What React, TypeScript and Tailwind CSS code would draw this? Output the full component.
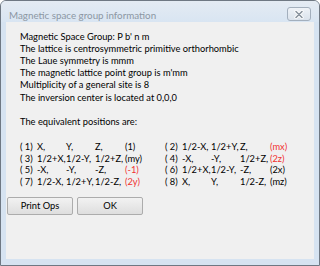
const rows: [string, string, string, string, string, boolean][] = [
  ["( 1)", "X,", "Y,", "Z,", "(1)", false],
  ["( 2)", "1/2-X,", "1/2+Y,", "Z,", "(mx)", true],
  ["( 3)", "1/2+X,", "1/2-Y,", "1/2+Z,", "(my)", false],
  ["( 4)", "-X,", "-Y,", "1/2+Z,", "(2z)", true],
  ["( 5)", "-X,", "-Y,", "-Z,", "(-1)", true],
  ["( 6)", "1/2+X,", "1/2-Y,", "-Z,", "(2x)", false],
  ["( 7)", "1/2-X,", "1/2+Y,", "1/2-Z,", "(2y)", true],
  ["( 8)", "X,", "Y,", "1/2-Z,", "(mz)", false],
];

const lines = [
  "Magnetic Space Group: P b' n m",
  "The lattice is centrosymmetric primitive orthorhombic",
  "The Laue symmetry is mmm",
  "The magnetic lattice point group is m'mm",
  "Multiplicity of a general site is 8",
  "The inversion center is located at 0,0,0",
  "\u00a0",
  "The equivalent positions are:",
];

function CloseButton() {
  return (
    <div className="ml-auto mr-[8px] mt-[6px] w-[24px] h-[14px] rounded-[3px] border border-[#a3afbd] bg-gradient-to-b from-[#eef2f7] to-[#dbe3ec] flex items-center justify-center">
      <svg width="10" height="9" viewBox="0 0 10 9">
        <path d="M2 1.5 L8 7.5 M8 1.5 L2 7.5" stroke="#ffffff" strokeWidth="3.2" strokeLinecap="round" />
        <path d="M2 1.5 L8 7.5 M8 1.5 L2 7.5" stroke="#8a949f" strokeWidth="1.6" strokeLinecap="round" />
      </svg>
    </div>
  );
}

export default function App() {
  return (
    <div
      className="w-[320px] h-[266px] border border-[#6f7883] rounded-t-[6px] bg-[#d6e3f1] flex flex-col overflow-hidden"
      style={{ fontFamily: "Lato, 'Noto Sans', sans-serif" }}
    >
      {/* title bar */}
      <div className="h-[21px] flex items-start bg-gradient-to-b from-[#e4ebf3] to-[#d9e5f2]">
        <span className="pl-[8px] pt-[8px] text-[9.8px] leading-[13px] text-[#8c97a3] whitespace-nowrap">
          Magnetic space group information
        </span>
        <CloseButton />
      </div>

      {/* client area */}
      <div className="mx-[5px] h-[237px] bg-[#f0f0f0] flex flex-col pt-[8.6px] text-[9.3px] text-black">
        <div className="pl-[14px] leading-[12.2px]">
          {lines.map((l, i) => (
            <div key={i} className="whitespace-nowrap">{l}</div>
          ))}
        </div>

        <div className="pl-[14px] mt-[12.6px] grid grid-cols-[17px_29px_29px_30px_40px_17px_29px_29px_30px_auto] leading-[11.7px] whitespace-pre">
          {rows.map((r, i) => (
            <div key={i} className="contents">
              <span>{r[0]}</span>
              <span>{r[1]}</span>
              <span>{r[2]}</span>
              <span>{r[3]}</span>
              <span className={r[5] ? "text-[#f03030]" : ""}>{r[4]}</span>
            </div>
          ))}
        </div>

        <div className="pl-[1px] mt-[9.4px] flex gap-[4px]">
          <button className="w-[66px] h-[18px] rounded-[2px] border border-[#acacac] bg-gradient-to-b from-[#f2f2f2] to-[#dedede] text-[9.3px] leading-none text-black">
            Print Ops
          </button>
          <button className="w-[66px] h-[18px] rounded-[2px] border border-[#acacac] bg-gradient-to-b from-[#f2f2f2] to-[#dedede] text-[9.3px] leading-none text-black">
            OK
          </button>
        </div>
      </div>
    </div>
  );
}
